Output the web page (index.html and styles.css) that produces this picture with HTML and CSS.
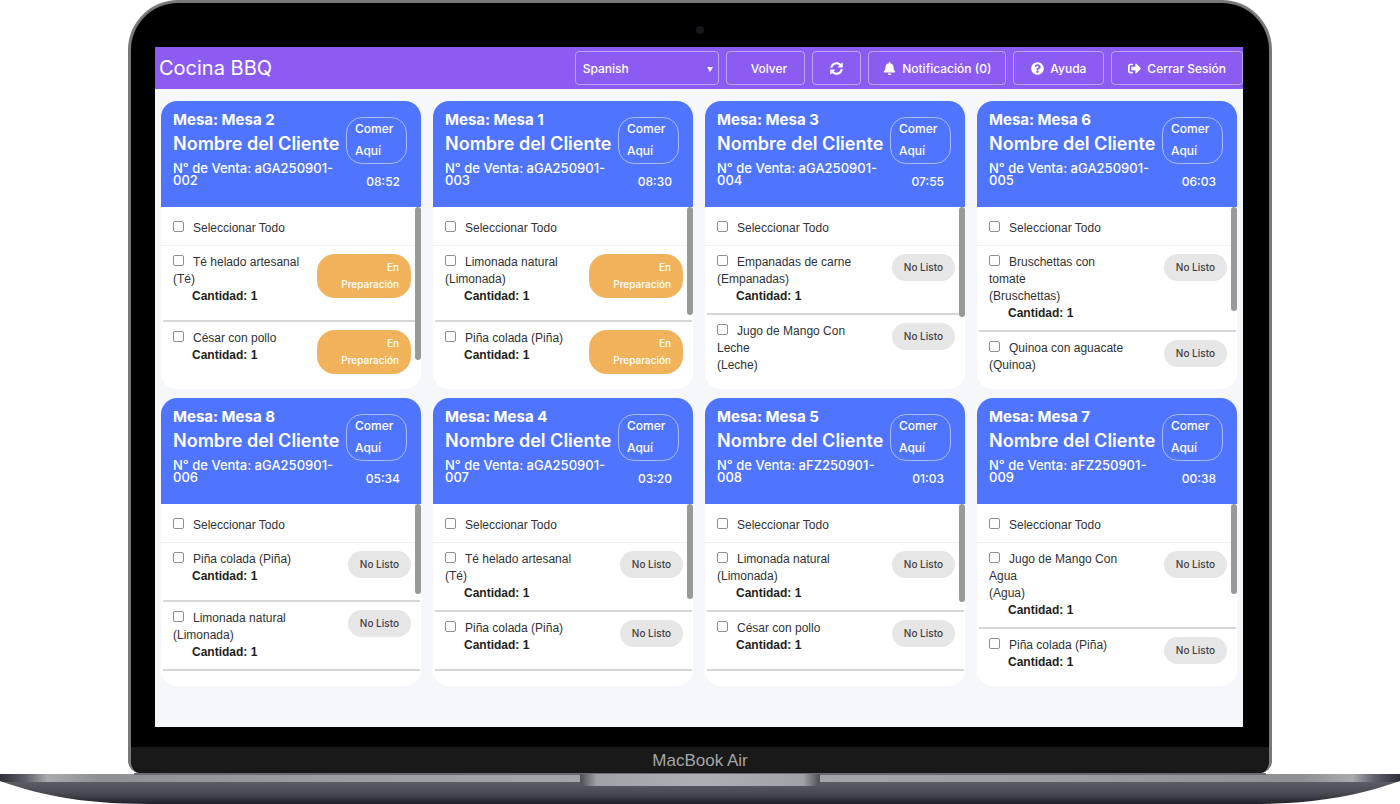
FILE: index.html
```html
<!DOCTYPE html>
<html lang="es">
<head>
    <meta charset="UTF-8">
    <meta name="viewport" content="width=device-width, initial-scale=1.0">
    <title>Cocina BBQ</title>
    <link rel="stylesheet" href="styles.css">
</head>
<body>

<div class="laptop">
    <div class="lid">
        <div class="camera"></div>

        <div class="screen">
            <header class="topbar">
                <h1>Cocina BBQ</h1>
                <nav class="actions">
                    <div class="language">
                        <select id="language" aria-label="Idioma">
                            <option>Spanish</option>
                            <option>English</option>
                        </select>
                    </div>
                    <button type="button" class="btn btn-back">Volver</button>
                    <button type="button" class="btn btn-refresh" aria-label="Actualizar">
                        <svg viewBox="0 0 512 512"><path d="M370.7 133.3C339.5 104 298.900 88 255.800 88c-77.500.1-144.300 53.200-162.800 126.900-1.300 5.400-6.100 9.200-11.700 9.200H24.100c-7.500 0-13.200-6.800-11.800-14.200C33.900 94.900 134.800 8 256 8c66.400 0 126.800 26.100 171.300 68.700L463 41C478.100 25.900 504 36.600 504 57.900V192c0 13.300-10.700 24-24 24H345.900c-21.400 0-32.100-25.900-17-41l41.800-41.700zM32 296h134.100c21.400 0 32.100 25.900 17 41l-41.800 41.800c31.300 29.300 71.800 45.300 114.900 45.200 77.400-.1 144.300-53.100 162.800-126.800 1.300-5.400 6.100-9.200 11.700-9.200h57.300c7.500 0 13.200 6.800 11.800 14.200C478.100 417.100 377.200 504 256 504c-66.400 0-126.800-26.100-171.300-68.700L49 471C33.900 486.100 8 475.400 8 454.100V320c0-13.300 10.700-24 24-24z"/></svg>
                    </button>
                    <button type="button" class="btn btn-bell">
                        <svg viewBox="0 0 448 512"><path d="M224 512c35.300 0 64-28.700 64-64H160c0 35.300 28.600 64 64 64zM439.400 362.300C420 341.500 383.900 310.200 383.900 208c0-77.700-54.500-139.900-127.900-155.200V32c0-17.700-14.300-32-32-32s-32 14.300-32 32v20.800C118.600 68.100 64.100 130.300 64.100 208c0 102.200-36.200 133.500-55.500 154.300C2.600 368.700 0 376.400 0 384c.1 16.400 13 32 32.100 32h383.800c19.100 0 32-15.600 32.100-32 0-7.600-2.600-15.300-8.600-21.700z"/></svg>
                        Notificación (0)
                    </button>
                    <button type="button" class="btn btn-help">
                        <svg viewBox="0 0 512 512"><path fill-rule="evenodd" d="M504 256c0 137-111 248-248 248S8 393 8 256 119 8 256 8s248 111 248 248zM262.700 90c-54.500 0-89.300 23-116.500 63.800-3.500 5.300-2.400 12.400 2.700 16.200l34.700 26.300c5.200 3.900 12.600 3 16.700-2.100 17.800-22.700 30.100-35.800 57.300-35.800 20.400 0 45.700 13.100 45.700 33 0 15-12.400 22.700-32.500 34C247.100 238.500 216 254.900 216 296v4c0 6.600 5.400 12 12 12h56c6.600 0 12-5.400 12-12v-1.300c0-28.500 83.200-29.600 83.200-106.700 0-58-60.200-102-116.500-102zM256 338c-25.400 0-46 20.600-46 46s20.600 46 46 46 46-20.600 46-46-20.600-46-46-46z"/></svg>
                        Ayuda
                    </button>
                    <button type="button" class="btn btn-logout">
                        <svg viewBox="0 0 512 512"><path d="M497 273L329 441c-15 15-41 4.500-41-17v-96H152c-13.300 0-24-10.700-24-24v-96c0-13.300 10.700-24 24-24h136V88c0-21.400 25.900-32 41-17l168 168c9.300 9.400 9.300 24.600 0 34zM192 436v-40c0-6.600-5.400-12-12-12H96c-17.700 0-32-14.300-32-32V160c0-17.700 14.300-32 32-32h84c6.600 0 12-5.400 12-12V76c0-6.600-5.400-12-12-12H96c-53 0-96 43-96 96v192c0 53 43 96 96 96h84c6.600 0 12-5.400 12-12z"/></svg>
                        Cerrar Sesión
                    </button>
                </nav>
            </header>

            <main class="orders" id="orders"></main>
        </div>

        <div class="chin">MacBook Air</div>
    </div>

    <div class="base">
        <svg class="base-shape" viewBox="0 0 1400 31" preserveAspectRatio="none">
            <defs>
                <linearGradient id="metal" x1="0" y1="0" x2="0" y2="1">
                    <stop offset="0" stop-color="#5e5f66"/>
                    <stop offset="0.55" stop-color="#484950"/>
                    <stop offset="1" stop-color="#20202b"/>
                </linearGradient>
                <linearGradient id="edge" x1="0" y1="0" x2="1" y2="0">
                    <stop offset="0" stop-color="#2e2f38"/>
                    <stop offset="0.018" stop-color="#5d5f66"/>
                    <stop offset="0.034" stop-color="#a9abad"/>
                    <stop offset="0.07" stop-color="#8d8f92"/>
                    <stop offset="0.25" stop-color="#9c9ea1"/>
                    <stop offset="0.5" stop-color="#a6a8ab"/>
                    <stop offset="0.75" stop-color="#9c9ea1"/>
                    <stop offset="0.93" stop-color="#8d8f92"/>
                    <stop offset="0.966" stop-color="#a9abad"/>
                    <stop offset="0.982" stop-color="#5d5f66"/>
                    <stop offset="1" stop-color="#2e2f38"/>
                </linearGradient>
                <linearGradient id="notch" x1="0" y1="0" x2="1" y2="0">
                    <stop offset="0" stop-color="#4c4d54"/>
                    <stop offset="0.07" stop-color="#a0a2a5"/>
                    <stop offset="0.5" stop-color="#adafb2"/>
                    <stop offset="0.93" stop-color="#a0a2a5"/>
                    <stop offset="1" stop-color="#4c4d54"/>
                </linearGradient>
            </defs>
            <path fill="url(#metal)" d="M0 8 C35 20 75 31 150 31 H1250 C1325 31 1365 20 1400 8 Z"/>
            <path fill="url(#edge)" d="M0 1 H1400 V8 L1396 9 H4 L0 8 Z"/>
            <path fill="#6c6d71" d="M134 0 H1266 V2 H134 Z"/>
            <path fill="url(#notch)" d="M580 1 H820 V9 Q819 13 811 13 H589 Q581 13 580 9 Z"/>
        </svg>
    </div>
</div>

<script src="script.js"></script>
</body>
</html>
```

FILE: styles.css
```css
/* Global styles */
* {
    box-sizing: border-box;
}

body {
    margin: 0;
    background: #ffffff;
    font-family: Inter, "Liberation Sans", sans-serif;
    color: #2f3136;
}

/* Laptop frame */
.lid {
    margin: 0 128px;
    padding: 44px 26px 0 24px;
    background: #000000;
    border: 3px solid #77797b;
    border-bottom: 0;
    border-radius: 50px 50px 12px 12px;
    position: relative;
}

.camera {
    position: absolute;
    top: 23px;
    left: 50%;
    width: 8px;
    height: 8px;
    margin-left: -4px;
    border-radius: 50%;
    background: #17181b;
}

.chin {
    margin: 20px -26px 0 -24px;
    height: 26px;
    line-height: 28px;
    background: #191919;
    border-radius: 0 0 12px 12px;
    color: #a5a6a8;
    font-family: "Liberation Sans", Arial, sans-serif;
    font-size: 17px;
    text-align: center;
}

.base-shape {
    display: block;
    width: 100%;
    height: 31px;
}

.screen {
    background: #f5f7fb;
    padding-bottom: 41px;
}

/* Top bar */
.topbar {
    display: flex;
    align-items: center;
    justify-content: space-between;
    height: 42px;
    padding-left: 4px;
    background: #8c5cf2;
    color: #ffffff;
}

.topbar h1 {
    margin: 0;
    font-size: 20px;
    font-weight: 400;
}

.actions {
    display: flex;
    gap: 7px;
}

.btn,
.language select {
    height: 34px;
    border: 1px solid #c2a5f9;
    border-radius: 4px;
    background: transparent;
    color: #ffffff;
    font-family: inherit;
    font-size: 12px;
}

.btn {
    display: flex;
    align-items: center;
    justify-content: center;
    gap: 6px;
    padding: 0 17px;
    font-weight: 500;
    white-space: nowrap;
    cursor: pointer;
}

.btn svg {
    width: 13px;
    height: 13px;
    fill: currentColor;
}

.btn-back {
    padding-left: 24px;
}

.btn-bell {
    padding: 0 14px;
}

.btn-logout {
    padding: 0 16px;
}

.language {
    position: relative;
}

.language select {
    width: 144px;
    padding: 0 7px;
    appearance: none;
    font-weight: 500;
}

.language::after {
    content: "";
    position: absolute;
    right: 6px;
    top: 16px;
    border: 3px solid transparent;
    border-top: 5px solid #ffffff;
    border-bottom: 0;
    pointer-events: none;
}

/* Orders */
.orders {
    display: grid;
    grid-template-columns: repeat(4, 1fr);
    gap: 9px 12px;
    padding: 12px 6px 0;
}

.card {
    padding-bottom: 14px;
    background: #ffffff;
    border-radius: 16px;
    overflow: hidden;
}

.card-head {
    display: flex;
    justify-content: space-between;
    height: 106px;
    padding: 8px 14px 0 12px;
    background: #4f75ff;
    color: #ffffff;
    white-space: nowrap;
}

.card-head h2,
.card-head h3,
.card-head p {
    margin: 0;
}

.card-head h2 {
    font-size: 15px;
    line-height: 21px;
    font-weight: 700;
}

.card-head h3 {
    margin-top: 2px;
    font-size: 18px;
    line-height: 24px;
    font-weight: 600;
}

.card-head p {
    margin-top: 6px;
    font-size: 13px;
    line-height: 12px;
    font-weight: 500;
}

.card-side {
    display: flex;
    flex-direction: column;
    align-items: flex-end;
    padding-top: 8px;
}

.place {
    width: 61px;
    height: 47px;
    padding: 0 8px;
    border: 1px solid #a7baff;
    border-radius: 16px;
    font-size: 12px;
    line-height: 22px;
    font-weight: 500;
}

.time {
    padding: 10px 7px 0 0;
    font-size: 12px;
    line-height: 16px;
    font-weight: 500;
}

.card-body {
    position: relative;
    height: 168px;
    overflow: hidden;
    font-family: "Liberation Sans", Arial, sans-serif;
    font-size: 12px;
    line-height: 17px;
}

.thumb {
    position: absolute;
    top: 0;
    right: 0;
    width: 6px;
    border-radius: 3px;
    background: #999999;
}

.card-body input {
    appearance: none;
    width: 11px;
    height: 11px;
    margin: 0 9px 0 0;
    border: 1px solid #8e8e8e;
    border-radius: 2px;
    background: #ffffff;
}

.select-all {
    height: 39px;
    padding: 13px 12px 0;
    border-bottom: 1px solid #eeeff1;
}

.item {
    display: flex;
    justify-content: space-between;
    align-items: flex-start;
    margin: 0 1px 0 2px;
    padding: 8px 9px 8px 10px;
    border-bottom: 2px solid #d6d6d6;
    white-space: nowrap;
}

.item strong {
    display: block;
    padding-left: 19px;
    font-weight: 700;
    color: #1d1e20;
}

.status {
    margin-bottom: 14px;
    padding: 5px 12px;
    border: 0;
    border-radius: 18px;
    background: #e6e6e6;
    color: #3f4145;
    font-family: Inter, "Liberation Sans", sans-serif;
    font-size: 10px;
    line-height: 17px;
    font-weight: 500;
    text-align: right;
    cursor: pointer;
}

.status.preparing {
    width: 94px;
    background: #f0b35c;
    color: #ffffff;
}
```

FILE: script.js
```js
const PREP = 'prep';
const PENDING = 'pending';

// thumb is the height of the scroll handle on each card
const orders = [
    { table: 2, sale: 'aGA250901-', num: '002', time: '08:52', thumb: 153, items: [
        ['Té helado artesanal<br>(Té)', PREP, 1], ['César con pollo', PREP, 1]] },
    { table: 1, sale: 'aGA250901-', num: '003', time: '08:30', thumb: 108, items: [
        ['Limonada natural<br>(Limonada)', PREP, 1], ['Piña colada (Piña)', PREP, 1]] },
    { table: 3, sale: 'aGA250901-', num: '004', time: '07:55', thumb: 110, items: [
        ['Empanadas de carne<br>(Empanadas)', PENDING, 1], ['Jugo de Mango Con<br>Leche<br>(Leche)', PENDING]] },
    { table: 6, sale: 'aGA250901-', num: '005', time: '06:03', thumb: 104, items: [
        ['Bruschettas con<br>tomate<br>(Bruschettas)', PENDING, 1], ['Quinoa con aguacate<br>(Quinoa)', PENDING]] },
    { table: 8, sale: 'aGA250901-', num: '006', time: '05:34', thumb: 90, items: [
        ['Piña colada (Piña)', PENDING, 1], ['Limonada natural<br>(Limonada)', PENDING, 1]] },
    { table: 4, sale: 'aGA250901-', num: '007', time: '03:20', thumb: 95, items: [
        ['Té helado artesanal<br>(Té)', PENDING, 1], ['Piña colada (Piña)', PENDING, 1]] },
    { table: 5, sale: 'aFZ250901-', num: '008', time: '01:03', thumb: 98, items: [
        ['Limonada natural<br>(Limonada)', PENDING, 1], ['César con pollo', PENDING, 1]] },
    { table: 7, sale: 'aFZ250901-', num: '009', time: '00:38', thumb: 90, items: [
        ['Jugo de Mango Con<br>Agua<br>(Agua)', PENDING, 1], ['Piña colada (Piña)', PENDING, 1]] }
];

function renderItem(item) {
    const [name, state, quantity] = item;
    const button = state === PREP
        ? '<button type="button" class="status preparing">En<br>Preparación</button>'
        : '<button type="button" class="status">No Listo</button>';

    return `
        <div class="item">
            <div>
                <label><input type="checkbox">${name}</label>
                ${quantity ? `<strong>Cantidad: ${quantity}</strong>` : ''}
            </div>
            ${button}
        </div>`;
}

function renderOrder(order) {
    return `
        <article class="card">
            <div class="card-head">
                <div>
                    <h2>Mesa: Mesa ${order.table}</h2>
                    <h3>Nombre del Cliente</h3>
                    <p>N° de Venta: ${order.sale}<br>${order.num}</p>
                </div>
                <div class="card-side">
                    <span class="place">Comer<br>Aquí</span>
                    <span class="time">${order.time}</span>
                </div>
            </div>
            <div class="card-body">
                <div class="select-all">
                    <label><input type="checkbox">Seleccionar Todo</label>
                </div>
                ${order.items.map(renderItem).join('')}
                <span class="thumb" style="height: ${order.thumb}px"></span>
            </div>
        </article>`;
}

document.getElementById('orders').innerHTML = orders.map(renderOrder).join('');
```
